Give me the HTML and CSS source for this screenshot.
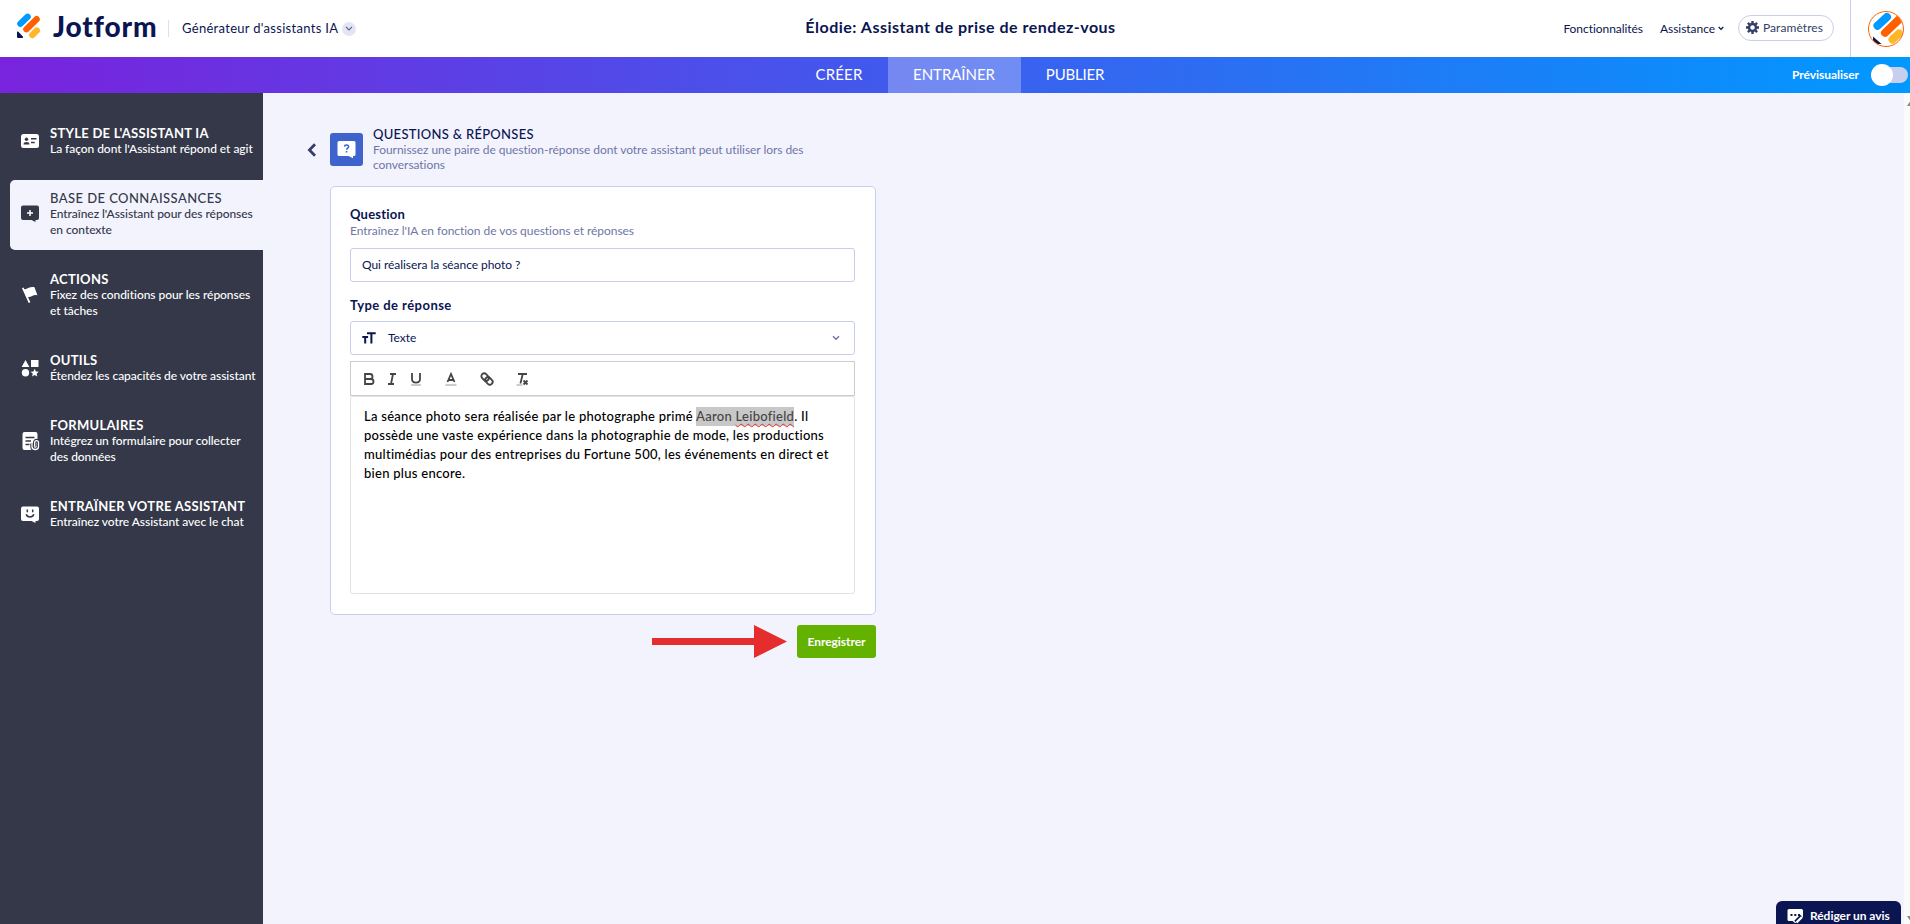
FILE: index.html
```html
<!DOCTYPE html>
<html lang="fr">
<head>
    <meta charset="UTF-8">
    <meta name="viewport" content="width=device-width, initial-scale=1.0">
    <title>Élodie: Assistant de prise de rendez-vous</title>
    <link rel="stylesheet" href="styles.css">
</head>
<body>
    <header class="header">
        <div class="header-left">
            <svg class="logo-mark" width="24" height="26" viewBox="0 0 24 26">
                <g fill="none" stroke-width="6.4" stroke-linecap="round">
                    <path stroke="#0099ff" d="M3.4 10.800 10.600 3.800"/>
                    <path stroke="#ff6100" d="M9.400 16.200 19.600 6.200"/>
                    <path stroke="#ffb629" d="M15.400 22 19.800 17.600"/>
                </g>
                <path fill="#0a1551" d="M0 19.400c0-1 .8-1.200 1.400-.6l4.200 4.400c.8.8.6 1.800-.6 1.800H1.600C.6 25 0 24.400 0 23.400z"/>
            </svg>
            <span class="logo-text">Jotform</span>
            <span class="separator"></span>
            <span class="product">Générateur d'assistants IA</span>
            <span class="product-toggle">
                <svg width="8" height="5" viewBox="0 0 8 5"><path d="M1 .8 4 3.800 7 .8" fill="none" stroke="#5a618c" stroke-width="1.200"/></svg>
            </span>
        </div>
        <h1 class="page-title">Élodie: Assistant de prise de rendez-vous</h1>
        <div class="header-right">
            <a class="header-link">Fonctionnalités</a>
            <a class="header-link">Assistance <svg width="6" height="5" viewBox="0 0 6 5"><path d="M.7 1 3 3.400 5.300 1" fill="none" stroke="#0a1551" stroke-width="1.300"/></svg></a>
            <button class="settings">
                <svg width="13" height="13" viewBox="0 0 13 13">
                    <g fill="none" stroke="#343c6a">
                        <circle cx="6.500" cy="6.500" r="3.500" stroke-width="2.400"/>
                        <path stroke-width="2.400" d="M6.500 0v2.200M6.500 10.800V13M0 6.500h2.200M10.800 6.500H13M1.900 1.900l1.600 1.600M9.500 9.500l1.600 1.600M11.100 1.900 9.500 3.500M3.500 9.500l-1.600 1.600"/>
                    </g>
                </svg>
                Paramètres
            </button>
            <div class="account">
                <svg width="36" height="36" viewBox="0 0 36 36">
                    <defs><clipPath id="avatar"><circle cx="18" cy="18" r="17.200"/></clipPath></defs>
                    <circle cx="18" cy="18" r="17.500" fill="#fff"/>
                    <g clip-path="url(#avatar)">
                        <g fill="none" stroke-width="8" stroke-linecap="round">
                            <path stroke="#0099ff" d="M9.500 14.800 19 6"/>
                            <path stroke="#ff6100" d="M17 21.800 32 7.500"/>
                            <path stroke="#ffb629" d="M24.500 28.500 31 22.500"/>
                        </g>
                        <path fill="#0a1551" d="M5 25.500 13.500 33 5 33z"/>
                    </g>
                    <circle cx="18" cy="18" r="17.500" fill="none" stroke="#ff6100"/>
                </svg>
            </div>
        </div>
    </header>

    <nav class="tabs">
        <div class="tab-list">
            <a class="tab tab-create">CRÉER</a>
            <a class="tab tab-train active">ENTRAÎNER</a>
            <a class="tab tab-publish">PUBLIER</a>
        </div>
        <div class="preview">
            <span class="preview-label">Prévisualiser</span>
            <span class="switch"><span class="knob"></span></span>
        </div>
    </nav>

    <div class="layout">
        <aside class="sidebar">
            <a class="item">
                <svg width="20" height="20" viewBox="0 0 20 20">
                    <rect x="1" y="3" width="18" height="14" rx="2.500" fill="#fff"/>
                    <circle cx="6.500" cy="8.200" r="1.700" fill="#343849"/>
                    <path fill="#343849" d="M3.500 13.400c0-3.200 6-3.200 6 0zM11 7h5.500v1.500H11zM11 10.800h3.700v1.500H11z"/>
                </svg>
                <div>
                    <h2>STYLE DE L'ASSISTANT IA</h2>
                    <p>La façon dont l'Assistant répond et agit</p>
                </div>
            </a>
            <a class="item selected">
                <svg width="20" height="20" viewBox="0 0 20 20">
                    <path fill="#343849" d="M3 1.500h14a2 2 0 0 1 2 2V14a2 2 0 0 1-2 2h-1.500v2l-4-2H3a2 2 0 0 1-2-2V3.500a2 2 0 0 1 2-2z"/>
                    <path d="M10 6v6M7 9h6" stroke="#fff" stroke-width="1.500" fill="none"/>
                </svg>
                <div>
                    <h2>BASE DE CONNAISSANCES</h2>
                    <p>Entraînez l'Assistant pour des réponses<br>en contexte</p>
                </div>
            </a>
            <a class="item">
                <svg width="20" height="20" viewBox="0 0 20 20">
                    <path fill="#fff" d="M2 3.200 3.600 2.600 4.200 4C7 5 9 1.200 14.500 2.200l3 8.200c-4-1.500-6 2.200-9.500 1.600l2.400 5.200-1.700.8z"/>
                </svg>
                <div>
                    <h2>ACTIONS</h2>
                    <p>Fixez des conditions pour les réponses<br>et tâches</p>
                </div>
            </a>
            <a class="item">
                <svg width="20" height="20" viewBox="0 0 20 20">
                    <path fill="#fff" d="M5.500 2 9.400 9H1.600zM11 2h7.500v7H11z"/>
                    <circle cx="5.500" cy="14.700" r="3.700" fill="#fff"/>
                    <path fill="#fff" d="m14.700 10.800 1.200 2.700 2.900.3-2.200 1.900.7 2.900-2.600-1.500-2.600 1.500.7-2.900-2.200-1.900 2.900-.3z"/>
                </svg>
                <div>
                    <h2>OUTILS</h2>
                    <p>Étendez les capacités de votre assistant</p>
                </div>
            </a>
            <a class="item">
                <svg width="20" height="20" viewBox="0 0 20 20">
                    <path fill="#fff" d="M4.500 1h11a2 2 0 0 1 2 2v14a2 2 0 0 1-2 2h-11a2 2 0 0 1-2-2V3a2 2 0 0 1 2-2z"/>
                    <path d="M5.500 6.500h9M5.500 10h5.500M5.500 13.500h4" stroke="#343849" stroke-width="1.500" fill="none"/>
                    <path d="M12 12.500v3.300c0 3.600 6.500 3.600 6.500 0V11.500c0-2.600-3.800-2.600-3.800 0v4" stroke="#343849" stroke-width="3.400" fill="none"/>
                    <path d="M12 12.500v3.300c0 3.600 6.500 3.600 6.500 0V11.500c0-2.600-3.800-2.600-3.800 0v4" stroke="#fff" stroke-width="1.300" fill="none"/>
                </svg>
                <div>
                    <h2>FORMULAIRES</h2>
                    <p>Intégrez un formulaire pour collecter<br>des données</p>
                </div>
            </a>
            <a class="item">
                <svg width="20" height="20" viewBox="0 0 20 20">
                    <path fill="#fff" d="M3 2.500h14a2 2 0 0 1 2 2V15a2 2 0 0 1-2 2h-1.500v2l-4-2H3a2 2 0 0 1-2-2V4.500a2 2 0 0 1 2-2z"/>
                    <path d="M7.300 5.500v2.800M12.700 5.500v2.800M6.200 10.300c1 3.600 6.600 3.600 7.600 0" stroke="#343849" stroke-width="1.500" fill="none"/>
                </svg>
                <div>
                    <h2>ENTRAÏNER VOTRE ASSISTANT</h2>
                    <p>Entraînez votre Assistant avec le chat</p>
                </div>
            </a>
        </aside>

        <main class="content">
            <div class="section-head">
                <svg class="back" width="10" height="14" viewBox="0 0 10 14"><path d="M8 1.200 2.400 7 8 12.800" fill="none" stroke="#343c6a" stroke-width="2.700"/></svg>
                <div class="section-icon">
                    <svg width="19" height="18" viewBox="0 0 19 18">
                        <path fill="#fff" d="M2 0h15a1.500 1.500 0 0 1 1.500 1.500v12A1.500 1.500 0 0 1 17 15h-1v2.300L11.500 15H2a1.500 1.500 0 0 1-1.500-1.500v-12A1.500 1.500 0 0 1 2 0z"/>
                        <path d="M7.400 5.600c.2-2.200 4.200-2.100 4.200.1 0 1.500-2 1.400-2 3M9.500 10v1.600" stroke="#3e63cc" stroke-width="1.500" fill="none"/>
                    </svg>
                </div>
                <div class="section-text">
                    <h2>QUESTIONS &amp; RÉPONSES</h2>
                    <p>Fournissez une paire de question-réponse dont votre assistant peut utiliser lors des<br>conversations</p>
                </div>
            </div>

            <div class="card">
                <label class="label">Question</label>
                <p class="hint">Entraînez l'IA en fonction de vos questions et réponses</p>
                <div class="field">Qui réalisera la séance photo ?</div>

                <label class="label label-type">Type de réponse</label>
                <div class="field select">
                    <svg width="14" height="12" viewBox="0 0 14 12"><path d="M5 1.300h8.700M9.400 1v10.500M.3 4.900h5.800M3.200 5v6.500" stroke="#0a1551" stroke-width="2" fill="none"/></svg>
                    <span>Texte</span>
                    <svg class="caret" width="8" height="6" viewBox="0 0 8 6"><path d="M1 1.200 4 4.200 7 1.200" fill="none" stroke="#6f76a7" stroke-width="1.500"/></svg>
                </div>

                <div class="toolbar">
                    <svg width="18" height="18" viewBox="0 0 18 18"><path d="M5 4h5a2.500 2.500 0 0 1 0 5H5zM5 9h6a2.500 2.500 0 0 1 0 5H5z"/></svg>
                    <svg class="italic" width="18" height="18" viewBox="0 0 18 18"><path d="M7 4h6M5 14h6M10 4 8 14"/></svg>
                    <svg class="underline" width="18" height="18" viewBox="0 0 18 18"><path d="M5 3v6c0 4.700 8 4.700 8 0V3"/><path class="thin" d="M4 15h10"/></svg>
                    <svg class="color" width="18" height="18" viewBox="0 0 18 18"><path d="M5.500 12 9 4l3.500 8M6.500 10h5"/><path class="thin" d="M3.500 15h11"/></svg>
                    <svg class="link" width="18" height="18" viewBox="0 0 18 18"><g transform="rotate(45 9 9)"><rect x="2.200" y="6.200" width="8.200" height="5.600" rx="2.800"/><rect x="7.600" y="6.200" width="8.200" height="5.600" rx="2.800"/></g></svg>
                    <svg class="clean" width="18" height="18" viewBox="0 0 18 18"><path d="M5 4h9M9.800 4 7.400 13.500M10.500 10.500l4 4M14.500 10.500l-4 4"/><path class="thin" d="M3.500 15h6"/></svg>
                </div>
                <div class="editor">
                    La séance photo sera réalisée par le photographe primé <span class="selection">Aaron <span class="misspelled">Leibofield</span></span>. Il<br>
                    possède une vaste expérience dans la photographie de mode, les productions<br>
                    multimédias pour des entreprises du Fortune 500, les événements en direct et<br>
                    bien plus encore.
                </div>
            </div>

            <div class="actions">
                <svg class="arrow" width="135" height="33" viewBox="0 0 135 33"><path fill="#e62d2d" d="M0 13h102V0l33 16.500L102 33V20H0z"/></svg>
                <button class="save">Enregistrer</button>
            </div>
        </main>

        <div class="scrollbar">
            <span class="scroll-up"></span>
            <span class="scroll-down"></span>
        </div>
    </div>

    <div class="feedback">
        <svg width="17" height="17" viewBox="0 0 17 17">
            <path fill="#fff" d="M2 1h12.500a1.500 1.500 0 0 1 1.500 1.500V10l-5.500 5H8l-2.500-2H2A1.500 1.500 0 0 1 .5 11.500v-9A1.500 1.500 0 0 1 2 1z"/>
            <path d="M3.500 7h2M7.300 7h2M11 7h2" stroke="#0a1551" stroke-width="1.800"/>
            <path d="m9 14.500 6-6" stroke="#0a1551" stroke-width="5"/>
            <path d="m9.500 14.500 5.500-5.500" stroke="#fff" stroke-width="2.400"/>
        </svg>
        <span>Rédiger un avis</span>
    </div>
</body>
</html>
```
FILE: styles.css
```css
* {
    box-sizing: border-box;
}
body {
    margin: 0;
    height: 924px;
    overflow: hidden;
    display: flex;
    flex-direction: column;
    font-family: Lato, "Liberation Sans", sans-serif;
    font-size: 12px;
    letter-spacing: -0.05px;
    color: #0a1551;
    background-color: #f3f3fe;
}
h1, h2, p {
    margin: 0;
}
svg {
    flex: none;
}
button {
    font: inherit;
    letter-spacing: inherit;
}

/* Header */
.header {
    display: grid;
    grid-template-columns: 1fr auto 1fr;
    height: 57px;
    padding: 0 6px 0 17px;
    background-color: #fff;
}
.header-left {
    display: flex;
    align-items: center;
    padding-bottom: 5px;
}
.logo-mark {
    margin-right: 12px;
}
.logo-text {
    width: 103px;
    font-size: 28px;
    font-weight: 900;
    line-height: 30px;
    letter-spacing: 0.9px;
}
.separator {
    width: 1px;
    height: 17px;
    margin: 4px 13px 0 12px;
    background-color: #dcdef2;
}
.product {
    padding-top: 3px;
    font-size: 13px;
    letter-spacing: 0.3px;
}
.product-toggle {
    display: flex;
    align-items: center;
    justify-content: center;
    width: 14px;
    height: 14px;
    margin: 5px 0 0 4px;
    border-radius: 50%;
    background-color: #e3e5f5;
}
.page-title {
    font-size: 16px;
    font-weight: 700;
    line-height: 54px;
    letter-spacing: 0.5px;
}
.header-right {
    display: flex;
    align-items: center;
    justify-content: flex-end;
}
.header-link {
    display: flex;
    align-items: center;
    gap: 3px;
    margin: 0 17px 1px 0;
    white-space: nowrap;
}
.header-link + .header-link {
    margin-right: 14px;
}
.settings {
    display: flex;
    align-items: center;
    gap: 4px;
    width: 96px;
    height: 26px;
    margin-bottom: 1px;
    padding: 0 0 1px 7px;
    border: 1px solid #c8ceed;
    border-radius: 13px;
    background-color: #fff;
    color: #343c6a;
    letter-spacing: 0.07px;
}
.account {
    display: flex;
    align-items: center;
    height: 57px;
    margin-left: 16px;
    padding-left: 17px;
    border-left: 1px solid #c8ceed;
}

/* Tabs */
.tabs {
    display: grid;
    grid-template-columns: 1fr auto 1fr;
    height: 36px;
    padding: 0 2px 0 12px;
    background: linear-gradient(90deg, #7923dd, #0099ff);
    color: #fff;
}
.tab-list {
    grid-column: 2;
    display: flex;
}
.tab {
    font-size: 15px;
    line-height: 35px;
    text-align: center;
}
.tab-create {
    width: 97px;
    letter-spacing: 0.2px;
}
.tab-train {
    width: 133px;
}
.tab-publish {
    width: 109px;
    letter-spacing: -0.2px;
}
.tab.active {
    background-color: rgba(255, 255, 255, 0.28);
}
.preview {
    display: flex;
    align-items: center;
    justify-content: flex-end;
    gap: 12px;
    font-weight: 700;
}
.preview-label {
    padding-bottom: 2px;
}
.switch {
    display: flex;
    align-items: center;
    width: 37px;
    height: 16px;
    border-radius: 8px;
    background: linear-gradient(90deg, transparent 11px, #c8ceed 11px);
}
.knob {
    width: 22px;
    height: 22px;
    border-radius: 50%;
    background-color: #fff;
}

.layout {
    display: flex;
    flex: 1;
    min-height: 0;
}

/* Sidebar */
.sidebar {
    display: flex;
    flex-direction: column;
    gap: 11px;
    width: 263px;
    padding: 22px 0 0 10px;
    background-color: #343849;
    color: #fff;
}
.item {
    display: flex;
    align-items: center;
    gap: 10px;
    padding: 10px 0 12px 10px;
    border-radius: 5px 0 0 5px;
    white-space: nowrap;
}
.item h2 {
    font-size: 13px;
    font-weight: 700;
    line-height: 16px;
    letter-spacing: 0.28px;
}
.item p {
    font-weight: 500;
    line-height: 16px;
}
.item.selected {
    background-color: #f3f3fe;
    color: #343849;
}
.item.selected h2 {
    font-weight: 500;
    letter-spacing: 0.43px;
}

/* Content */
.content {
    flex: 1;
    padding: 33px 0 0 44px;
}
.section-head {
    display: flex;
    height: 60px;
}
.back {
    margin-top: 17px;
}
.section-icon {
    display: flex;
    align-items: center;
    justify-content: center;
    width: 33px;
    height: 33px;
    margin: 7px 10px 0 13px;
    border-radius: 3px;
    background-color: #3e63cc;
}
.section-text h2 {
    font-size: 13px;
    font-weight: 500;
    line-height: 16px;
    letter-spacing: 0.3px;
}
.section-text p {
    line-height: 15px;
    color: #6f76a7;
}
.card {
    width: 546px;
    height: 429px;
    margin-left: 23px;
    padding: 18px 20px 0 19px;
    border: 1px solid #c8ceed;
    border-radius: 5px;
    background-color: #fff;
}
.label {
    display: block;
    font-size: 13px;
    font-weight: 700;
    line-height: 18px;
    letter-spacing: 0.2px;
}
.hint {
    height: 25px;
    padding-top: 1px;
    line-height: 14px;
    color: #6f76a7;
}
.field {
    display: flex;
    align-items: center;
    height: 34px;
    padding: 0 11px 2px;
    border: 1px solid #c8ceed;
    border-radius: 3px;
}
.label-type {
    margin: 14px 0 7px;
    letter-spacing: 0.45px;
}
.select svg {
    margin-top: 2px;
}
.select .caret {
    margin-left: auto;
    margin-right: 3px;
}
.select span {
    margin-left: 12px;
}
.toolbar {
    display: flex;
    align-items: center;
    height: 35px;
    margin-top: 6px;
    padding-left: 9px;
    border: 1px solid #ccc;
}
.toolbar svg {
    fill: none;
    stroke: #444;
    stroke-width: 1.8;
}
.toolbar .thin {
    stroke: #999;
    stroke-width: 1;
}
.toolbar .italic {
    margin-left: 5px;
}
.toolbar .underline {
    margin-left: 6px;
}
.toolbar .color {
    margin-left: 17px;
}
.toolbar .link {
    margin-left: 18px;
}
.toolbar .clean {
    margin-left: 17px;
}
.editor {
    height: 198px;
    padding: 10px 0 0 13px;
    border: 1px solid #e3e3e6;
    border-radius: 3px;
    font-size: 13px;
    font-weight: 500;
    line-height: 19px;
    letter-spacing: 0.27px;
    color: #000;
    white-space: nowrap;
}
.selection {
    padding: 1px 0 2px;
    background-color: #c8c8c8;
    color: #444;
}
.misspelled {
    text-decoration: underline wavy #e62d2d 1px;
    text-underline-offset: 2px;
    text-decoration-skip-ink: none;
}
.actions {
    display: flex;
    justify-content: flex-end;
    gap: 10px;
    width: 569px;
    padding-top: 10px;
}
.save {
    width: 79px;
    height: 33px;
    padding: 0 0 1px;
    border: none;
    border-radius: 3px;
    background-color: #64b200;
    color: #fff;
    font-weight: 700;
}

/* Right edge */
.scrollbar {
    display: flex;
    flex-direction: column;
    justify-content: space-between;
    width: 6px;
    padding: 7px 0 2px 3px;
    overflow: hidden;
    background-color: #fbfbfb;
}
.scroll-up,
.scroll-down {
    width: 8px;
    border: 4px solid transparent;
    border-top-width: 0;
    border-bottom: 6px solid #888;
}
.scroll-down {
    border-top: 6px solid #888;
    border-bottom-width: 0;
}
.feedback {
    position: fixed;
    right: 9px;
    bottom: -7px;
    display: flex;
    align-items: center;
    gap: 6px;
    width: 125px;
    height: 30px;
    padding-left: 11px;
    border-radius: 6px 6px 0 0;
    background-color: #0a1551;
    color: #fff;
    font-weight: 700;
}
.feedback span {
    padding-bottom: 2px;
}
```
